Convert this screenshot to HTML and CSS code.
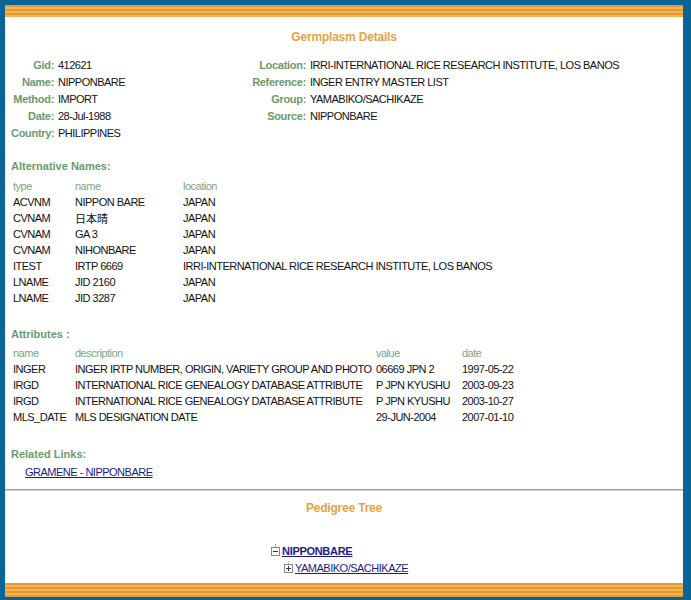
FILE: index.html
```html
<!DOCTYPE html>
<html>
<head>
<meta charset="utf-8">
<link rel="stylesheet" href="styles.css">
</head>
<body>
<div class="frame">
  <div class="stripe"></div>
  <div class="content">
    <h1 class="title">Germplasm Details</h1>
    <div class="details">
      <span class="lbl">Gid:</span><span class="val">412621</span>
      <span class="lbl">Location:</span><span class="val">IRRI-INTERNATIONAL RICE RESEARCH INSTITUTE, LOS BANOS</span>
      <span class="lbl">Name:</span><span class="val">NIPPONBARE</span>
      <span class="lbl">Reference:</span><span class="val">INGER ENTRY MASTER LIST</span>
      <span class="lbl">Method:</span><span class="val">IMPORT</span>
      <span class="lbl">Group:</span><span class="val">YAMABIKO/SACHIKAZE</span>
      <span class="lbl">Date:</span><span class="val">28-Jul-1988</span>
      <span class="lbl">Source:</span><span class="val">NIPPONBARE</span>
      <span class="lbl">Country:</span><span class="val">PHILIPPINES</span>
      <span></span><span></span>
    </div>

    <h2 class="section sec-alt">Alternative Names:</h2>
    <table class="grid alt">
      <tr><th class="c1">type</th><th class="c2">name</th><th>location</th></tr>
      <tr><td>ACVNM</td><td>NIPPON BARE</td><td>JAPAN</td></tr>
      <tr><td>CVNAM</td><td class="cjk">日本晴</td><td>JAPAN</td></tr>
      <tr><td>CVNAM</td><td>GA 3</td><td>JAPAN</td></tr>
      <tr><td>CVNAM</td><td>NIHONBARE</td><td>JAPAN</td></tr>
      <tr><td>ITEST</td><td>IRTP 6669</td><td>IRRI-INTERNATIONAL RICE RESEARCH INSTITUTE, LOS BANOS</td></tr>
      <tr><td>LNAME</td><td>JID 2160</td><td>JAPAN</td></tr>
      <tr><td>LNAME</td><td>JID 3287</td><td>JAPAN</td></tr>
    </table>

    <h2 class="section sec-attr">Attributes :</h2>
    <table class="grid attr">
      <tr><th class="a1">name</th><th class="a2">description</th><th class="a3">value</th><th>date</th></tr>
      <tr><td>INGER</td><td>INGER IRTP NUMBER, ORIGIN, VARIETY GROUP AND PHOTO</td><td>06669 JPN 2</td><td>1997-05-22</td></tr>
      <tr><td>IRGD</td><td>INTERNATIONAL RICE GENEALOGY DATABASE ATTRIBUTE</td><td>P JPN KYUSHU</td><td>2003-09-23</td></tr>
      <tr><td>IRGD</td><td>INTERNATIONAL RICE GENEALOGY DATABASE ATTRIBUTE</td><td>P JPN KYUSHU</td><td>2003-10-27</td></tr>
      <tr><td>MLS_DATE</td><td>MLS DESIGNATION DATE</td><td>29-JUN-2004</td><td>2007-01-10</td></tr>
    </table>

    <h2 class="section sec-links">Related Links:</h2>
    <div class="links"><a href="#">GRAMENE - NIPPONBARE</a></div>

    <hr class="rule">

    <h1 class="title sub">Pedigree Tree</h1>

    <div class="tree">
      <div class="node root">
        <svg class="tog" width="11" height="13" viewBox="0 0 11 13"><line x1="5.5" y1="0" x2="5.5" y2="3" stroke="#999" stroke-dasharray="1 1"/><rect x="1.5" y="3.5" width="8" height="8" fill="#fff" stroke="#888"/><line x1="3" y1="7.5" x2="8" y2="7.5" stroke="#333"/></svg>
        <a href="#" class="bold">NIPPONBARE</a>
      </div>
      <div class="node child">
        <svg class="tog" width="11" height="13" viewBox="0 0 11 13"><line x1="5.5" y1="0" x2="5.5" y2="3" stroke="#999" stroke-dasharray="1 1"/><rect x="1.5" y="3.5" width="8" height="8" fill="#fff" stroke="#888"/><line x1="3" y1="7.5" x2="8" y2="7.5" stroke="#333"/><line x1="5.5" y1="5" x2="5.5" y2="10" stroke="#333"/></svg>
        <a href="#">YAMABIKO/SACHIKAZE</a>
      </div>
    </div>
  </div>
  <div class="stripe bottom"></div>
</div>
</body>
</html>
```

FILE: styles.css
```css
html, body {
  margin: 0;
  padding: 0;
}
body {
  background: #0a6597;
  font-family: "Liberation Sans", Arial, sans-serif;
  font-size: 11px;
  letter-spacing: -0.5px;
  color: #111;
}
.frame {
  margin: 5px 8px 0 5px;
  height: 592px;
  display: flex;
  flex-direction: column;
  background: #fff;
}
.stripe {
  height: 12px;
  flex: none;
  background: repeating-linear-gradient(to bottom, #e69a35 0px, #e69a35 2px, #f2b455 2px, #f2b455 4px);
}
.stripe.bottom {
  height: 14px;
}
.content {
  flex: 1;
  padding: 12px 0 0 6px;
}
.title {
  margin: 0;
  text-align: center;
  font-size: 12px;
  line-height: 16px;
  font-weight: bold;
  letter-spacing: -0.2px;
  color: #e2a545;
  padding-right: 6px;
}
.details {
  margin-top: 11px;
  display: grid;
  grid-template-columns: 43px 183px 61px 1fr;
  column-gap: 4px;
  grid-auto-rows: 17px;
  align-items: center;
}
.lbl {
  text-align: right;
  font-weight: bold;
  letter-spacing: -0.3px;
  color: #6b9a6b;
  white-space: nowrap;
}
.val {
  white-space: nowrap;
}
.section {
  margin: 0;
  font-size: 11px;
  line-height: 16px;
  font-weight: bold;
  letter-spacing: 0;
  color: #6b9a6b;
}
.sec-alt { margin-top: 17px; }
.sec-attr { margin-top: 20px; }
.sec-links { margin-top: 21px; }
.grid {
  border-collapse: collapse;
}
.grid th, .grid td {
  padding: 0 2px;
  height: 16px;
  line-height: 16px;
  text-align: left;
  white-space: nowrap;
  font-size: 11px;
}
.grid th {
  font-weight: normal;
  color: #7ea47e;
}
.alt { margin-top: 4px; }
.attr { margin-top: 3px; }
.c1 { width: 58px; }
.c2 { width: 104px; }
.a1 { width: 58px; }
.a2 { width: 297px; }
.a3 { width: 82px; }
.cjk {
  font-family: "Noto Sans CJK JP", "Liberation Sans", sans-serif;
  letter-spacing: 0;
}
.links {
  padding-left: 14px;
  line-height: 16px;
  margin-top: 2px;
}
a {
  color: #1a1a8c;
  text-decoration: underline;
}
.rule {
  margin: 9px 0 0 -6px;
  border: 0;
  border-top: 1px solid #9a9a9a;
  border-bottom: 1px solid #d8d8d8;
  height: 0;
}
.sub {
  margin-top: 9px;
}
.tree {
  margin-top: 26px;
  padding-left: 259px;
}
.node {
  display: flex;
  align-items: center;
  height: 17px;
  gap: 1px;
}
.node.child {
  padding-left: 13px;
}
.tog {
  flex: none;
}
.bold {
  font-weight: bold;
  letter-spacing: -0.3px;
}
```
